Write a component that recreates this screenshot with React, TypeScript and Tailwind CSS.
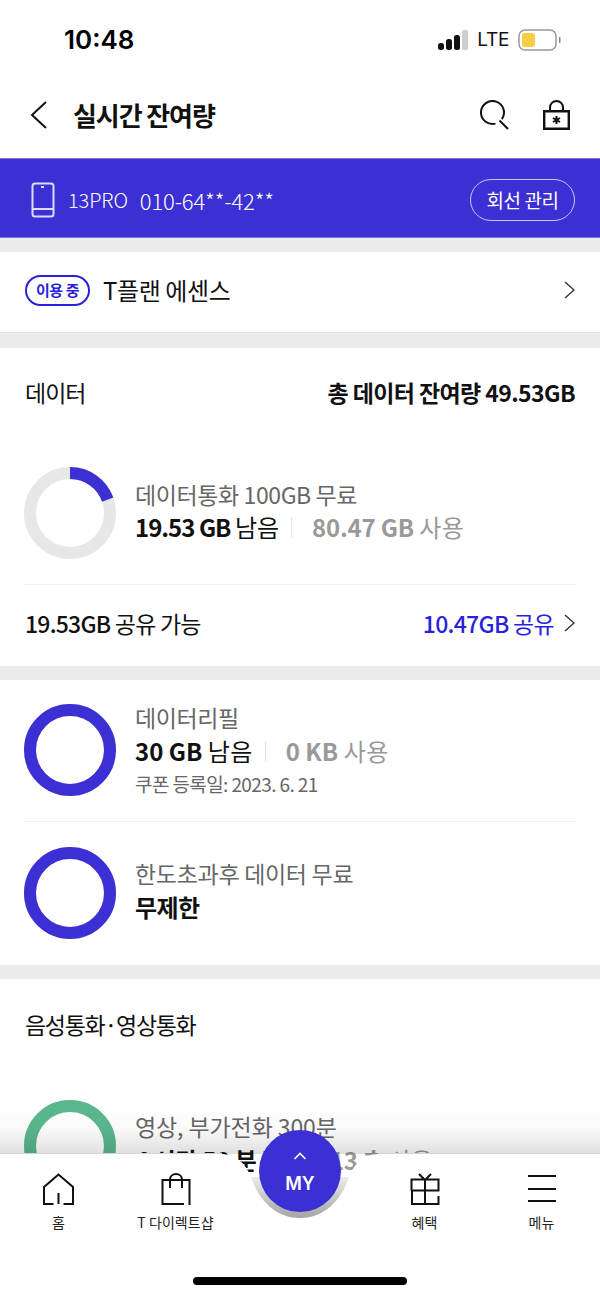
import React from "react";

const font = { fontFamily: '"Noto Sans CJK KR", "Noto Sans", sans-serif' };

function Ring({ color, pct, track = "#e7e7e7", width = 12 }: { color: string; pct: number; track?: string; width?: number }) {
  const r = 46 - width / 2;
  const c = 2 * Math.PI * r;
  return (
    <svg width="92" height="92" viewBox="0 0 92 92" className="shrink-0">
      <circle cx="46" cy="46" r={r} fill="none" stroke={track} strokeWidth={width} />
      <circle
        cx="46"
        cy="46"
        r={r}
        fill="none"
        stroke={color}
        strokeWidth={width}
        strokeDasharray={`${(c * pct) / 100} ${c}`}
        transform="rotate(-90 46 46)"
      />
    </svg>
  );
}

function Chevron({ color = "#333", h = 18 }: { color?: string; h?: number }) {
  return (
    <svg width="11" height={h} viewBox="0 0 11 18" fill="none" className="shrink-0">
      <path d="M1 1l9 8-9 8" stroke={color} strokeWidth="1.4" />
    </svg>
  );
}

function Sep() {
  return <span className="mx-[12px] inline-block h-[20px] w-px bg-[#e2e2e2]" />;
}

function NavItem({ label, children }: { label: string; children: React.ReactNode }) {
  return (
    <div className="flex w-[117px] flex-col items-center">
      <div className="flex h-[36px] items-end">{children}</div>
      <span className="mt-[8px] text-[14px] leading-[18px] tracking-[0.1px] text-[#222]">{label}</span>
    </div>
  );
}

export default function App() {
  return (
    <div style={font} className="relative h-[1298px] w-[600px] overflow-hidden bg-white text-black">
      {/* status bar */}
      <div className="flex h-[78px] items-start justify-between pl-[64px] pr-[38px] pt-[22px]">
        <span className="text-[26px] font-semibold leading-[36px]" style={{ fontFamily: '"Inter", sans-serif' }}>10:48</span>
        <div className="flex items-center gap-[9px] pt-[3px]">
          <svg width="30" height="20" viewBox="0 0 30 20">
            <rect x="0" y="13" width="6" height="7" rx="2.5" fill="#111" />
            <rect x="8" y="9" width="6" height="11" rx="2.5" fill="#111" />
            <rect x="16" y="5" width="6" height="15" rx="2.5" fill="#111" />
            <rect x="24" y="0" width="6" height="20" rx="2" fill="#cfcfcf" />
          </svg>
          <span className="text-[19px] leading-[30px] tracking-[-0.3px] text-[#111]" style={{ fontFamily: '"Inter", sans-serif' }}>LTE</span>
          <svg width="44" height="22" viewBox="0 0 44 22">
            <rect x="1" y="1" width="37" height="20" rx="6" fill="#fff" stroke="#999" strokeWidth="1.5" />
            <rect x="4" y="4" width="13" height="14" rx="3" fill="#f7cd45" />
            <rect x="41" y="8" width="1.5" height="6" fill="#888" />
          </svg>
        </div>
      </div>

      {/* title bar */}
      <div className="flex h-[80px] items-center justify-between pb-[6px] pl-[30px] pr-[30px]">
        <div className="flex items-center">
          <svg width="17" height="28" viewBox="0 0 17 28" fill="none">
            <path d="M16 1L2 14l14 13" stroke="#111" strokeWidth="2" />
          </svg>
          <span className="ml-[26px] text-[26px] font-bold leading-[36px] tracking-[-1.1px] text-[#111]">실시간 잔여량</span>
        </div>
        <div className="flex items-center gap-[33px]">
          <svg width="30" height="30" viewBox="0 0 30 30" fill="none">
            <path d="M21.9 19.1A11.5 11.5 0 1 0 15.5 23.6" stroke="#111" strokeWidth="2" />
            <path d="M19.5 20.5L28 29" stroke="#111" strokeWidth="2" />
          </svg>
          <svg width="27" height="30" viewBox="0 0 27 30" fill="none">
            <path d="M1.2 11.2h24.6v17.6H1.2z" stroke="#111" strokeWidth="2.4" />
            <path d="M7 11V7.5a6.5 6.5 0 0 1 13 0V11" stroke="#111" strokeWidth="2" />
            <path d="M13.5 16v8M10 18l7 4M17 18l-7 4" stroke="#111" strokeWidth="2" />
          </svg>
        </div>
      </div>

      {/* line banner */}
      <div className="flex h-[80px] items-center justify-between border-y border-[#7f78e3] bg-[#3c30d4] pl-[31px] pr-[25px] pt-[4px]">
        <div className="flex items-center">
          <svg width="24" height="36" viewBox="0 0 24 36" fill="none">
            <rect x="1.5" y="1.5" width="21" height="33" rx="2.5" stroke="#dcdcfa" strokeWidth="2" />
            <path d="M2 27h20" stroke="#dcdcfa" strokeWidth="2" />
            <rect x="10" y="4" width="3" height="2" fill="#dcdcfa" />
          </svg>
          <span className="ml-[13px] text-[20px] font-light leading-[30px] tracking-[-0.1px] text-white">13PRO</span>
          <span className="ml-[12px] text-[22px] font-light leading-[30px] tracking-[-0.15px] text-white">010-64**-42**</span>
        </div>
        <div className="flex h-[42px] w-[105px] items-center justify-center rounded-full border border-[#c9c6f3] text-[19px] leading-[26px] tracking-[-0.4px] text-white">
          회선 관리
        </div>
      </div>

      {/* plan row */}
      <div className="h-[14px] bg-[#ebecee]" />
      <div className="flex h-[81px] items-center justify-between border-b border-[#e2e3e5] pb-[4px] pl-[25px] pr-[25px]">
        <div className="flex items-center">
          <span className="flex h-[31px] w-[65px] items-center justify-center rounded-full border-2 border-[#2a1fdc] text-[15px] font-bold leading-[20px] tracking-[-0.4px] text-[#2a1fdc]">이용 중</span>
          <span className="ml-[13px] text-[24px] leading-[34px] tracking-[-0.4px] text-[#111]">T플랜 에센스</span>
        </div>
        <Chevron />
      </div>
      <div className="h-[15px] bg-[#ebecee]" />

      {/* data */}
      <div className="h-[318px] px-[24px]">
        <div className="flex h-[92px] items-center justify-between px-[1px] pb-[4px]">
          <span className="text-[23px] leading-[30px] tracking-[-1px] text-[#111]">데이터</span>
          <span className="text-[23px] font-bold leading-[30px] tracking-[-0.6px] text-[#111]">총 데이터 잔여량 49.53GB</span>
        </div>
        <div className="flex h-[145px] items-start border-b border-[#efefef] pt-[27px]">
          <Ring color="#3c30d4" pct={19.53} />
          <div className="ml-[19px] pt-[12px]">
            <div className="text-[23px] leading-[30px] tracking-[-0.4px] text-[#666]">데이터통화 100GB 무료</div>
            <div className="mt-[1px] flex items-center text-[24px] font-bold leading-[34px] text-[#111]">
              <span className="tracking-[-1px]">19.53 GB <span className="font-normal tracking-[0px]">남음</span></span>
              <Sep />
              <span className="ml-[8px] tracking-[-0.2px] text-[#999]">80.47 GB <span className="font-normal tracking-[0.5px]">사용</span></span>
            </div>
          </div>
        </div>
        <div className="flex h-[80px] items-center justify-between px-[1px] pb-[4px]">
          <span className="text-[23px] font-medium leading-[30px] tracking-[-0.77px] text-[#111]">19.53GB <span className="font-normal">공유 가능</span></span>
          <span className="flex items-center gap-[10px]">
            <span className="text-[23px] font-medium leading-[30px] tracking-[-0.7px] text-[#2a1fdc]">10.47GB <span className="font-normal">공유</span></span>
            <Chevron />
          </span>
        </div>
      </div>
      <div className="h-[14px] bg-[#ebecee]" />

      {/* refill */}
      <div className="h-[285px] px-[24px]">
        <div className="flex h-[142px] items-start border-b border-[#efefef] pt-[24px]">
          <Ring color="#3c30d4" pct={100} />
          <div className="ml-[19px] mt-[-2px]">
            <div className="text-[23px] leading-[30px] tracking-[-0.4px] text-[#666]">데이터리필</div>
            <div className="mt-[2px] flex items-center text-[24px] font-bold leading-[34px] tracking-[0px] text-[#111]">
              <span>30 GB <span className="font-normal tracking-[0.4px]">남음</span></span>
              <Sep />
              <span className="ml-[8px] text-[#999]">0 KB <span className="font-normal tracking-[0.5px]">사용</span></span>
            </div>
            <div className="mt-[3px] text-[19px] leading-[26px] tracking-[-0.6px] text-[#666]">쿠폰 등록일: 2023. 6. 21</div>
          </div>
        </div>
        <div className="flex items-start pt-[25px]">
          <Ring color="#3c30d4" pct={100} />
          <div className="ml-[19px] pt-[11px]">
            <div className="text-[23px] leading-[30px] tracking-[-0.3px] text-[#666]">한도초과후 데이터 무료</div>
            <div className="mt-[2px] text-[24px] font-bold leading-[34px] tracking-[-0.6px] text-[#111]">무제한</div>
          </div>
        </div>
      </div>
      <div className="h-[14px] bg-[#ebecee]" />

      {/* voice */}
      <div className="px-[24px]">
        <div className="flex h-[94px] items-center px-[1px] pb-[4px]">
          <span className="text-[23px] leading-[30px] tracking-[-1.3px] text-[#111]">음성통화·영상통화</span>
        </div>
        <div className="flex items-start pt-[27px]">
          <Ring color="#5ab88d" pct={100} />
          <div className="ml-[19px] pt-[11px]">
            <div className="text-[23px] leading-[30px] tracking-[-0.1px] text-[#666]">영상, 부가전화 300분</div>
            <div className="mt-[2px] flex items-center text-[24px] font-bold leading-[34px] tracking-[-0.4px] text-[#111]">
              <span>4 시간 50 분 <span className="font-normal">남음</span></span>
              <Sep />
              <span className="text-[#999]">13 초 <span className="font-normal">사용</span></span>
            </div>
          </div>
        </div>
      </div>

      {/* fade above the tab bar */}
      <div className="absolute left-0 right-0 top-[1100px] h-[54px] bg-gradient-to-b from-[#00000000] via-[#00000005] to-[#00000020]" />

      {/* tab bar */}
      <div className="absolute bottom-0 left-0 right-0 h-[145px]">
        <svg width="600" height="68" viewBox="0 0 600 68" className="absolute left-0 top-0">
          <defs>
            <linearGradient id="crescent" x1="0" y1="0" x2="0" y2="1">
              <stop offset="0" stopColor="#ececec" />
              <stop offset="0.5" stopColor="#c8c8c8" />
              <stop offset="1" stopColor="#a4a4a4" />
            </linearGradient>
          </defs>
          <path
            d="M0 1H222C238 2 246 12 251 24C259 48 276 65 300 65C324 65 341 48 349 24C354 12 362 2 378 1H600V68H0Z"
            fill="#fff"
          />
          <path d="M0 .5H222" stroke="#d4d4d4" strokeWidth="1" fill="none" />
          <path d="M378 .5H600" stroke="#d4d4d4" strokeWidth="1" fill="none" />
          <path d="M251 24C259 48 276 65 300 65C324 65 341 48 349 24Z" fill="url(#crescent)" />
        </svg>
        <div className="absolute left-[259px] top-[-23px] flex h-[82px] w-[82px] flex-col items-center rounded-full bg-[#3c30d4] text-white">
          <svg width="14" height="8" viewBox="0 0 14 8" fill="none" className="mt-[22px]">
            <path d="M1.5 7L7 1.5 12.5 7" stroke="#fff" strokeWidth="1.6" />
          </svg>
          <span className="mt-[12px] text-[18px] font-semibold leading-[24px]" style={{ fontFamily: '"Inter", sans-serif' }}>MY</span>
        </div>
        <div className="absolute left-0 right-0 top-[66px] bottom-0 bg-white" />
        <div className="absolute left-0 right-0 top-[16px] flex">
          <NavItem label="홈">
            <svg width="31" height="32" viewBox="0 0 31 32" fill="none">
              <path d="M10.5 31H1V14L15.5 1.5 30 14V31H20.5M15.5 20V31" stroke="#111" strokeWidth="2" />
            </svg>
          </NavItem>
          <NavItem label="T 다이렉트샵">
            <svg width="30" height="32" viewBox="0 0 30 32" fill="none">
              <path d="M23 31H1.5V7H28.5V32" stroke="#111" strokeWidth="2" />
              <path d="M9 15V6.5C9 3 12 1 15 1s6 2 6 5.5V15" stroke="#111" strokeWidth="2" />
            </svg>
          </NavItem>
          <div className="w-[132px]" />
          <NavItem label="혜택">
            <svg width="30" height="32" viewBox="0 0 30 32" fill="none">
              <path d="M9 1l6 6 6-6M1.5 17.5V6.5H28.5V17.5H1.5M2 17V31H28.5V23M15 7V31" stroke="#111" strokeWidth="2" />
            </svg>
          </NavItem>
          <NavItem label="메뉴">
            <svg width="28" height="32" viewBox="0 0 28 32" fill="none">
              <path d="M0 3h28M0 16h28M0 28h28" stroke="#111" strokeWidth="2" />
            </svg>
          </NavItem>
        </div>
        <div className="absolute bottom-[13px] left-[193px] h-[8px] w-[214px] rounded-full bg-black" />
      </div>
    </div>
  );
}
